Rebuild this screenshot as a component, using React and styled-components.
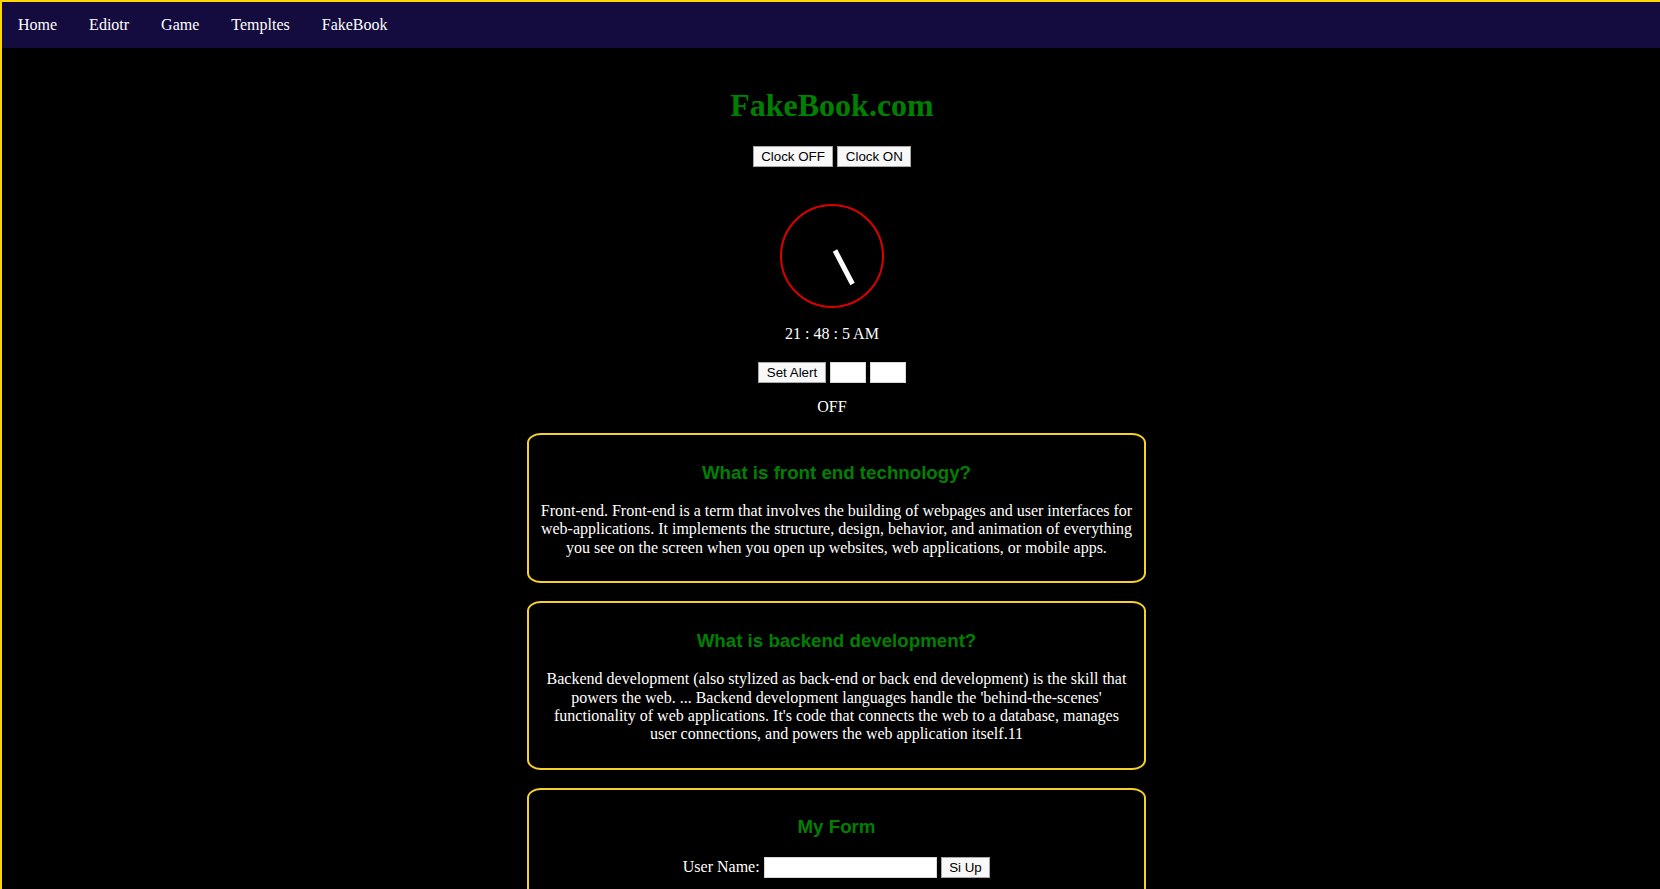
import React from "react";
import styled, { createGlobalStyle } from "styled-components";

const GlobalStyle = createGlobalStyle`
  html {
    overflow-x: hidden;
    background: #000;
  }
  body {
    margin: 0;
    width: 100%;
    min-height: 100vh;
    border: 2px solid #ffd700;
    background: #000;
    color: #fff;
    font-family: "Liberation Serif", "Times New Roman", serif;
    font-size: 16px;
  }
`;

const cards = [
  {
    title: "What is front end technology?",
    text: "Front-end. Front-end is a term that involves the building of webpages and user interfaces for web-applications. It implements the structure, design, behavior, and animation of everything you see on the screen when you open up websites, web applications, or mobile apps.",
  },
  {
    title: "What is backend development?",
    text: "Backend development (also stylized as back-end or back end development) is the skill that powers the web. ... Backend development languages handle the 'behind-the-scenes' functionality of web applications. It's code that connects the web to a database, manages user connections, and powers the web application itself.11",
  },
];

const App = () => {
  return (
    <>
      <GlobalStyle />
      <Nav>
        <NavLink>Home</NavLink>
        <NavLink>Ediotr</NavLink>
        <NavLink>Game</NavLink>
        <NavLink>Templtes</NavLink>
        <NavLink>FakeBook</NavLink>
      </Nav>
      <Main>
        <Title>FakeBook.com</Title>
        <Row $top={22}>
          <Button>Clock OFF</Button>
          <Button>Clock ON</Button>
        </Row>
        <Clock width="104" height="104" viewBox="0 0 104 104">
          <circle cx="52" cy="52" r="51" fill="none" stroke="#dd0000" strokeWidth="2" />
          <line x1="55" y1="46.5" x2="72.5" y2="80" stroke="#fff" strokeWidth="5" />
        </Clock>
        <TimeText $top={17}>21 : 48 : 5 AM</TimeText>
        <Row $top={19}>
          <Button>Set Alert</Button>
          <SmallInput />
          <SmallInput />
        </Row>
        <TimeText $top={15}>OFF</TimeText>
        <Cards>
          {cards.map((c) => (
            <Card key={c.title}>
              <CardTitle>{c.title}</CardTitle>
              <CardText>{c.text}</CardText>
            </Card>
          ))}
          <Card>
            <CardTitle>My Form</CardTitle>
            <FormRow>
              <label>User Name:</label>
              <NameInput />
              <Button>Si Up</Button>
            </FormRow>
          </Card>
        </Cards>
      </Main>
    </>
  );
};

const Nav = styled.nav`
  display: flex;
  background: #140b3e;
  height: 46px;
  align-items: center;
`;

const NavLink = styled.a`
  padding: 0 16px;
  color: #fff;
  font-size: 16px;
  line-height: 18px;
  cursor: pointer;
`;

const Main = styled.main`
  display: flex;
  flex-direction: column;
  align-items: center;
  padding-top: 39px;
  padding-bottom: 40px;
`;

const Title = styled.h1`
  margin: 0;
  color: #008000;
  font-size: 32px;
  line-height: 37px;
  font-weight: bold;
`;

const Row = styled.div`
  display: flex;
  gap: 4px;
  margin-top: ${(p) => p.$top}px;
`;

const Button = styled.button`
  height: 21px;
  padding: 0 7.5px;
  background: #f8f8f8;
  border: 1px solid #a8a8a8;
  color: #000;
  font-family: "Liberation Sans", Arial, sans-serif;
  font-size: 13.33px;
`;

const SmallInput = styled.input`
  width: 36px;
  height: 21px;
  box-sizing: border-box;
  border: 1px solid #d8d8d8;
  background: #fff;
`;

const NameInput = styled(SmallInput)`
  width: 173px;
`;

const Clock = styled.svg`
  display: block;
  margin-top: 37px;
`;

const TimeText = styled.div`
  margin-top: ${(p) => p.$top}px;
  line-height: 18px;
`;

const Cards = styled.section`
  display: flex;
  flex-direction: column;
  gap: 18px;
  margin-top: 17px;
  padding-left: 9px;
`;

const Card = styled.div`
  box-sizing: border-box;
  width: 619px;
  padding: 8px 10px;
  border: 2px solid #f5d22a;
  border-radius: 14px / 10px;
  text-align: center;
`;

const CardTitle = styled.h3`
  margin: 18.72px 0;
  color: #008000;
  font-family: "Liberation Sans", Arial, sans-serif;
  font-size: 18.72px;
  font-weight: bold;
  line-height: 21.5px;
`;

const CardText = styled.p`
  margin: 0 0 16px;
  line-height: 18.4px;
`;

const FormRow = styled.div`
  display: flex;
  justify-content: center;
  align-items: center;
  gap: 4px;
  padding-bottom: 20px;
`;

export default App;
